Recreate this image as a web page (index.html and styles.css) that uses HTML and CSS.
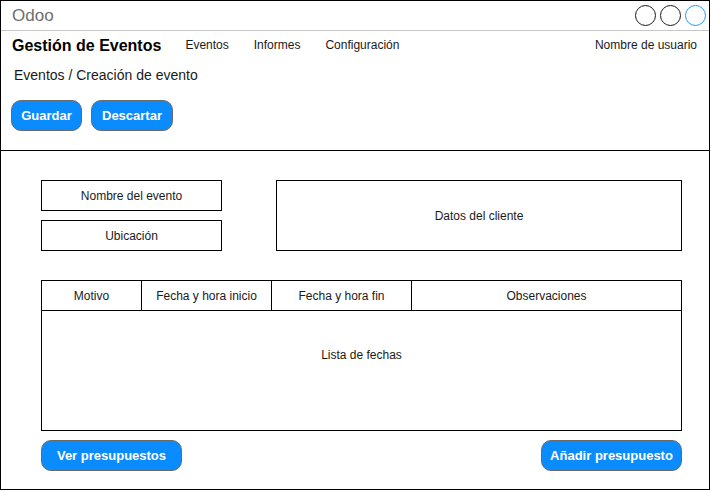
FILE: index.html
```html
<!DOCTYPE html>
<html lang="es">
<head>
<meta charset="utf-8">
<title>Odoo - Gestión de Eventos</title>
<link rel="stylesheet" href="styles.css">
</head>
<body>
<div class="window">
  <header class="header">
    <div class="titlebar">
      <span class="app-name">Odoo</span>
      <div class="win-controls">
        <span class="circle"></span>
        <span class="circle"></span>
        <span class="circle circle-blue"></span>
      </div>
    </div>
    <nav class="navbar">
      <span class="brand">Gestión de Eventos</span>
      <ul class="menu">
        <li>Eventos</li>
        <li>Informes</li>
        <li>Configuración</li>
      </ul>
      <span class="user">Nombre de usuario</span>
    </nav>
    <div class="breadcrumb">Eventos / Creación de evento</div>
    <div class="actions">
      <button class="btn btn-save">Guardar</button>
      <button class="btn btn-discard">Descartar</button>
    </div>
  </header>
  <main class="content">
    <section class="form-row">
      <div class="form-left">
        <div class="field">Nombre del evento</div>
        <div class="field field-second">Ubicación</div>
      </div>
      <div class="client">Datos del cliente</div>
    </section>
    <section class="table">
      <div class="table-head">
        <div class="col col-motivo">Motivo</div>
        <div class="col col-inicio">Fecha y hora inicio</div>
        <div class="col col-fin">Fecha y hora fin</div>
        <div class="col col-obs">Observaciones</div>
      </div>
      <div class="table-body">Lista de fechas</div>
    </section>
    <section class="bottom-actions">
      <button class="btn btn-wide">Ver presupuestos</button>
      <button class="btn btn-wide">Añadir presupuesto</button>
    </section>
  </main>
</div>
</body>
</html>
```
FILE: styles.css
```css
* { box-sizing: border-box; }
html, body { margin: 0; padding: 0; background: #fff; }
body { font-family: "Liberation Sans", Arial, sans-serif; color: #1a1a1a; }

.window {
  width: 710px;
  height: 490px;
  border: 1px solid #000;
  display: flex;
  flex-direction: column;
}

.header {
  height: 150px;
  border-bottom: 1px solid #000;
  display: flex;
  flex-direction: column;
  flex-shrink: 0;
}

.titlebar {
  height: 30px;
  border-bottom: 1px solid #c6c6c6;
  display: flex;
  align-items: center;
  justify-content: space-between;
  padding: 1px 3px 0 11px;
}
.app-name { font-size: 17px; color: #6e6e6e; }
.win-controls { display: flex; gap: 4px; padding-bottom: 2px; }
.circle {
  width: 21px; height: 21px;
  border: 1.3px solid #1a1a1a;
  border-radius: 50%;
  display: block;
}
.circle-blue { border-color: #2a96f5; }

.navbar {
  height: 29px;
  display: flex;
  align-items: center;
  padding: 0 12px 0 11px;
}
.brand { font-size: 16px; font-weight: bold; color: #000; }
.menu {
  list-style: none;
  margin: 0 0 0 24px;
  padding: 0;
  display: flex;
  gap: 25px;
  font-size: 12px;
  flex: 1;
  padding-bottom: 2px;
}
.user { font-size: 12px; padding-bottom: 2px; }

.breadcrumb {
  height: 30px;
  display: flex;
  align-items: center;
  padding-left: 13px;
  font-size: 14px;
}

.actions {
  display: flex;
  gap: 9px;
  padding: 10px 0 0 10px;
}

.btn {
  height: 31px;
  background: #0a8cff;
  border: 1px solid #6a6a6a;
  border-radius: 10px;
  color: #fff;
  font-family: "Liberation Sans", Arial, sans-serif;
  font-weight: bold;
  font-size: 13px;
  padding: 0;
  display: flex;
  align-items: center;
  justify-content: center;
}
.btn-save { width: 71px; }
.btn-discard { width: 82px; }
.btn-wide { width: 141px; }

.content {
  flex: 1;
  padding: 29px 0 0 40px;
  display: flex;
  flex-direction: column;
}

.form-row {
  display: flex;
  gap: 54px;
  height: 71px;
}
.form-left { display: flex; flex-direction: column; width: 181px; }
.field {
  height: 31px;
  border: 1px solid #000;
  font-size: 12px;
  display: flex;
  align-items: center;
  justify-content: center;
}
.field-second { margin-top: 9px; }
.client {
  width: 406px;
  height: 71px;
  border: 1px solid #000;
  font-size: 12px;
  display: flex;
  align-items: center;
  justify-content: center;
}

.table {
  margin-top: 29px;
  width: 641px;
  height: 151px;
  border: 1px solid #000;
  display: flex;
  flex-direction: column;
}
.table-head {
  height: 30px;
  border-bottom: 1px solid #000;
  display: flex;
  flex-shrink: 0;
}
.col {
  font-size: 12px;
  display: flex;
  align-items: center;
  justify-content: center;
  border-right: 1px solid #000;
}
.col-motivo { width: 100px; }
.col-inicio { width: 130px; }
.col-fin { width: 140px; }
.col-obs { flex: 1; border-right: none; }

.table-body {
  flex: 1;
  display: flex;
  justify-content: center;
  align-items: flex-start;
  padding-top: 37px;
  font-size: 12px;
}

.bottom-actions {
  margin-top: 9px;
  width: 641px;
  display: flex;
  justify-content: space-between;
}
```
